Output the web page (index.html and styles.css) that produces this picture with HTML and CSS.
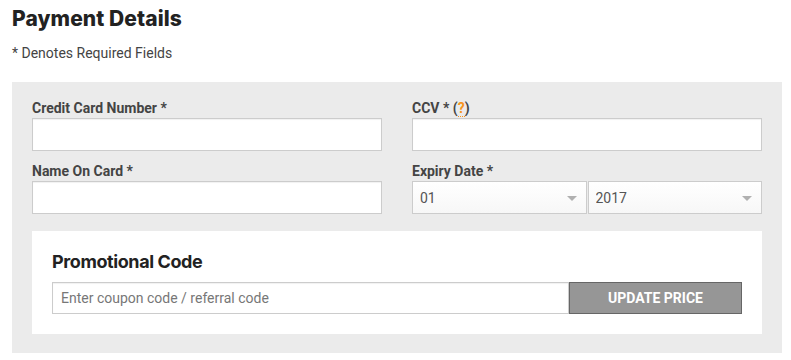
FILE: index.html
```html
<!DOCTYPE html>
<html lang="en">
  <head>
    <meta charset="UTF-8" />
    <meta name="viewport" content="width=device-width, initial-scale=1.0" />
    <title>Payment Details</title>
    <link rel="stylesheet" href="styles.css">
  </head>
  <body>
    <div class="container">
      <h1 class="page-title">Payment Details</h1>
      <p class="note">* Denotes Required Fields</p>

      <div class="payment-panel">
        <div class="form-grid">
          <div class="form-group">
            <label for="card-number">Credit Card Number *</label>
            <input type="text" id="card-number" />
          </div>
          <div class="form-group">
            <label for="ccv">CCV * (<span class="help" title="3 digits on the back of your card">?</span>)</label>
            <input type="text" id="ccv" />
          </div>
          <div class="form-group">
            <label for="card-name">Name On Card *</label>
            <input type="text" id="card-name" />
          </div>
          <div class="form-group">
            <label for="exp-month">Expiry Date *</label>
            <div class="expiry">
              <div class="select-wrap">
                <select id="exp-month">
                  <option>01</option>
                  <option>02</option>
                  <option>03</option>
                </select>
              </div>
              <div class="select-wrap">
                <select id="exp-year">
                  <option>2017</option>
                  <option>2018</option>
                  <option>2019</option>
                </select>
              </div>
            </div>
          </div>
        </div>

        <div class="promo-box">
          <h2 class="promo-title">Promotional Code</h2>
          <div class="promo-row">
            <input type="text" class="promo-input" placeholder="Enter coupon code / referral code" />
            <button class="btn-update">UPDATE PRICE</button>
          </div>
        </div>
      </div>
    </div>
  </body>
</html>
```

FILE: styles.css
```css
/* base */
* {
  margin: 0;
  padding: 0;
  box-sizing: border-box;
}

body {
  background-color: #fff;
  color: #444;
  font-family: Roboto, "Liberation Sans", Arial, sans-serif;
  font-size: 14px;
}

.container {
  width: 770px;
  margin-left: 12px;
}

.page-title {
  font-family: Inter, "Liberation Sans", Arial, sans-serif;
  font-weight: 800;
  font-size: 21px;
  line-height: 26px;
  color: #222;
  letter-spacing: 0.1px;
  padding-top: 6px;
}

.note {
  margin-top: 11px;
  line-height: 20px;
  color: #444;
}

/* panel */
.payment-panel {
  margin-top: 19px;
  background-color: #ebebeb;
  padding: 16px 20px 19px;
}

.form-grid {
  display: grid;
  grid-template-columns: 350px 350px;
  column-gap: 30px;
  row-gap: 10px;
}

.form-group label {
  display: block;
  font-weight: 700;
  font-size: 14px;
  line-height: 20px;
  color: #444;
}

.help {
  color: #f7941d;
  border-bottom: 1px dotted #f7941d;
  cursor: help;
}

input[type="text"] {
  display: block;
  width: 100%;
  height: 33px;
  padding: 0 8px;
  border: 1px solid #ccc;
  background-color: #fff;
  box-shadow: inset 0 1px 1px rgba(0, 0, 0, 0.06);
  font-family: Roboto, "Liberation Sans", Arial, sans-serif;
  font-size: 14px;
  color: #555;
}

input[type="text"]:focus {
  outline: none;
  border-color: #aaa;
}

/* expiry selects */
.expiry {
  display: flex;
  gap: 1px;
}

.select-wrap {
  position: relative;
  flex: 1;
}

.select-wrap::after {
  content: "";
  position: absolute;
  right: 10px;
  top: 15px;
  border-left: 5px solid transparent;
  border-right: 5px solid transparent;
  border-top: 5px solid #b0b0b0;
  pointer-events: none;
}

.select-wrap select {
  display: block;
  width: 100%;
  height: 33px;
  padding: 0 7px;
  border: 1px solid #ccc;
  border-radius: 0;
  background: linear-gradient(#fff, #f7f7f7);
  -webkit-appearance: none;
  appearance: none;
  font-family: Roboto, "Liberation Sans", Arial, sans-serif;
  font-size: 14px;
  color: #555;
}

/* promo */
.promo-box {
  margin-top: 17px;
  background-color: #fff;
  padding: 20px;
}

.promo-title {
  font-family: Inter, "Liberation Sans", Arial, sans-serif;
  font-weight: 700;
  font-size: 18px;
  line-height: 21px;
  margin-bottom: 10px;
  color: #222;
  letter-spacing: -0.4px;
}

.promo-row {
  display: flex;
}

.promo-input {
  flex: 1;
  height: 32px !important;
}

.promo-input::placeholder {
  color: #777;
}

.btn-update {
  width: 173px;
  height: 32px;
  background-color: #969696;
  border: 1px solid #666;
  color: #fff;
  font-family: Roboto, "Liberation Sans", Arial, sans-serif;
  font-weight: 700;
  font-size: 14px;
  cursor: pointer;
}

.btn-update:hover {
  background-color: #888;
}
```
